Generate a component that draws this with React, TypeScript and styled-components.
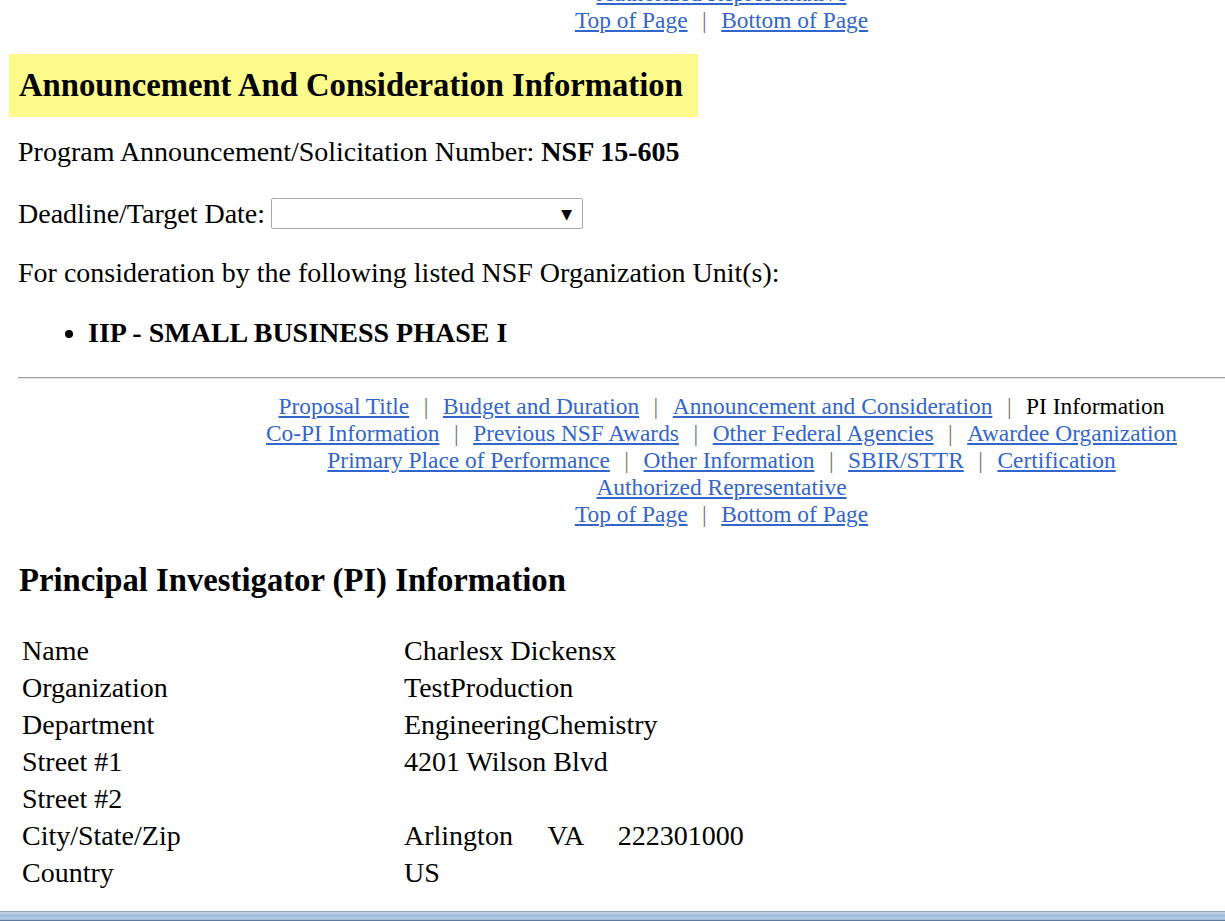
import React from "react";
import styled, { createGlobalStyle } from "styled-components";

const Global = createGlobalStyle`
  html, body { margin: 0; padding: 0; background: #fff; }
  body { font-family: "Liberation Serif", "Times New Roman", serif; color: #000; }
`;

const Page = styled.div`
  height: 921px;
  overflow: hidden;
  display: flex;
  flex-direction: column;
`;

const Content = styled.div`
  padding-left: 18px;
  font-size: 28px;
`;

const Nav = styled.nav<{ $mt: number }>`
  margin-top: ${(p) => p.$mt}px;
  padding-left: 200px;
  text-align: center;
  font-size: 23.4px;
  line-height: 27px;
`;

const NavLine = styled.div`
  white-space: nowrap;
`;

const NavLink = styled.a`
  color: #3366cc;
  text-decoration: underline;
`;

const Current = styled.span`
  color: #000;
`;

const Sep = styled.span`
  color: #7a7570;
  padding: 0 14.5px;
`;

const Banner = styled.h2`
  display: inline-block;
  margin: 20px 0 0 -9px;
  padding: 0 15px 0 10px;
  height: 63px;
  line-height: 63px;
  background: #fdfa8c;
  font-size: 32.7px;
  font-weight: bold;
`;

const Line = styled.p<{ $mt: number }>`
  margin: ${(p) => p.$mt}px 0 0;
  line-height: 30px;
  white-space: nowrap;
`;

const FieldRow = styled.div`
  margin-top: 31px;
  height: 31px;
  display: flex;
  align-items: center;
  gap: 6px;
`;

const FakeSelect = styled.div`
  box-sizing: border-box;
  width: 312px;
  height: 31px;
  border: 1px solid #a9a9a9;
  border-radius: 2px;
  display: flex;
  align-items: center;
  justify-content: flex-end;
  padding-right: 10px;
  font-family: "DejaVu Sans", sans-serif;
  font-size: 14px;
  color: #000;
`;

const List = styled.ul`
  margin: 30px 0 0;
  padding-left: 70px;
  line-height: 30px;
  font-weight: bold;
`;

const Rule = styled.hr`
  margin: 29px 0 0;
  border: 0;
  border-top: 1px solid #a0a0a0;
  border-bottom: 1px solid #e6e6e6;
  height: 0;
`;

const SectionTitle = styled.h2`
  margin: 34px 0 0 1px;
  line-height: 36px;
  font-size: 32.7px;
  font-weight: bold;
`;

const InfoGrid = styled.div`
  margin-top: 34px;
  padding-left: 4px;
  display: grid;
  grid-template-columns: 382px auto;
  grid-auto-rows: 37px;
  align-items: center;
`;

const Cell = styled.div`
  white-space: pre;
`;

const Taskbar = styled.div`
  margin-top: auto;
  height: 9px;
  background: linear-gradient(to bottom, #c8d8ea 0%, #9fbbdb 40%, #b8cde4 80%, #3c5a80 100%);
  border-top: 1px solid #8ea8c8;
`;

const navRows: string[][] = [
  ["Proposal Title", "Budget and Duration", "Announcement and Consideration", "*PI Information"],
  ["Co-PI Information", "Previous NSF Awards", "Other Federal Agencies", "Awardee Organization"],
  ["Primary Place of Performance", "Other Information", "SBIR/STTR", "Certification"],
  ["Authorized Representative"],
  ["Top of Page", "Bottom of Page"],
];

function NavBlock({ rows, mt }: { rows: string[][]; mt: number }) {
  return (
    <Nav $mt={mt}>
      {rows.map((r, i) => (
        <NavLine key={i}>
          {r.map((item, j) => (
            <React.Fragment key={j}>
              {j > 0 && <Sep>|</Sep>}
              {item.startsWith("*") ? (
                <Current>{item.slice(1)}</Current>
              ) : (
                <NavLink href="#">{item}</NavLink>
              )}
            </React.Fragment>
          ))}
        </NavLine>
      ))}
    </Nav>
  );
}

const info: [string, string][] = [
  ["Name", "Charlesx Dickensx"],
  ["Organization", "TestProduction"],
  ["Department", "EngineeringChemistry"],
  ["Street #1", "4201 Wilson Blvd"],
  ["Street #2", ""],
  ["City/State/Zip", "Arlington     VA     222301000"],
  ["Country", "US"],
];

export default function App() {
  return (
    <Page>
      <Global />
      <Content>
        <NavBlock rows={navRows.slice(3)} mt={-20} />
        <Banner>Announcement And Consideration Information</Banner>
        <Line $mt={20}>
          Program Announcement/Solicitation Number: <b>NSF 15-605</b>
        </Line>
        <FieldRow>
          <span>Deadline/Target Date:</span>
          <FakeSelect>▼</FakeSelect>
        </FieldRow>
        <Line $mt={29}>For consideration by the following listed NSF Organization Unit(s):</Line>
        <List>
          <li>IIP - SMALL BUSINESS PHASE I</li>
        </List>
        <Rule />
        <NavBlock rows={navRows} mt={14} />
        <SectionTitle>Principal Investigator (PI) Information</SectionTitle>
        <InfoGrid>
          {info.map(([k, v]) => (
            <React.Fragment key={k}>
              <Cell>{k}</Cell>
              <Cell>{v}</Cell>
            </React.Fragment>
          ))}
        </InfoGrid>
      </Content>
      <Taskbar />
    </Page>
  );
}
